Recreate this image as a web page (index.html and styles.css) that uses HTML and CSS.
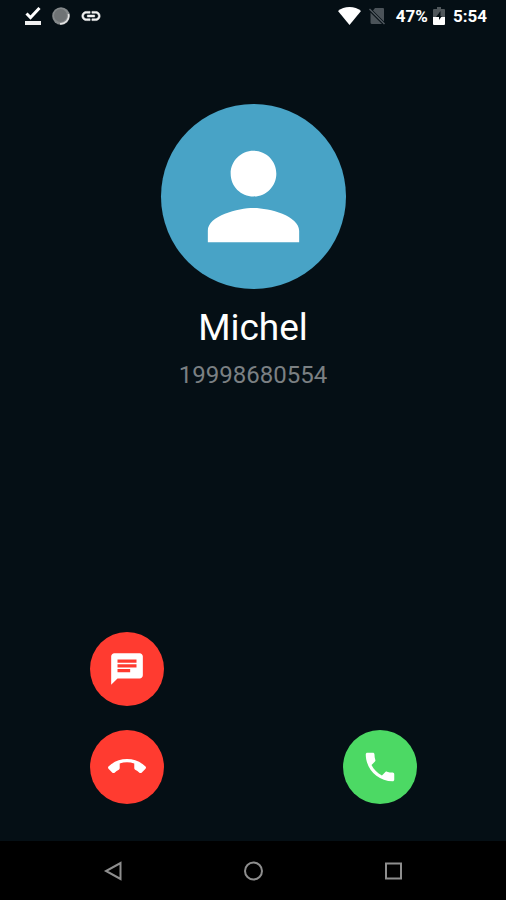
FILE: index.html
```html
<!DOCTYPE html>
<html lang="en">
<head>
<meta charset="utf-8">
<meta name="viewport" content="width=device-width, initial-scale=1">
<title>Incoming call</title>
<link rel="stylesheet" href="styles.css">
</head>
<body>
<header class="status">
  <div class="status-left">
    <svg width="18" height="18" viewBox="0 0 18 18" aria-hidden="true"><path d="M2.500 6.500 6.500 10.500 15.500 1" fill="none" stroke="#fff" stroke-width="3"/><path d="M1 14h16v4H1z" fill="#f0f0f0"/></svg>
    <svg width="18" height="18" viewBox="0 0 18 18" aria-hidden="true"><circle cx="9" cy="9" r="8.800" fill="#85898b"/><circle cx="8.500" cy="8.500" r="6.500" fill="#6f7375"/><path d="M16.500 7A8 8 0 0 1 8 16.800" fill="none" stroke="#e4e4e4" stroke-width="1.600"/></svg>
    <svg width="22" height="22" viewBox="0 0 24 24" aria-hidden="true"><path fill="#f2f2f2" stroke="#f2f2f2" stroke-width=".6" d="M3.900 12c0-1.710 1.390-3.100 3.100-3.100h4V7H7c-2.760 0-5 2.240-5 5s2.240 5 5 5h4v-1.900H7c-1.710 0-3.100-1.390-3.100-3.100zM8 13h8v-2H8v2zm9-6h-4v1.900h4c1.710 0 3.100 1.390 3.100 3.100s-1.390 3.100-3.100 3.100h-4V17h4c2.760 0 5-2.240 5-5s-2.240-5-5-5z"/></svg>
  </div>
  <div class="status-right">
    <svg width="23" height="18" viewBox="0 0 23 18" aria-hidden="true"><path fill="#fff" d="M11.500 18 0 4C3 1.500 7 0 11.500 0S20 1.500 23 4z"/></svg>
    <svg width="18" height="18" viewBox="0 0 18 18" aria-hidden="true"><path fill="#4b5359" d="M6 1h8a1 1 0 0 1 1 1v12.500L4 3.500zM1.500 5.500 13 17H3a1.500 1.500 0 0 1-1.500-1.500z"/><path d="M.5 2 15.500 17" stroke="#545c62" stroke-width="1.500"/></svg>
    <span class="percent">47%</span>
    <svg width="12" height="18" viewBox="0 0 12 18" aria-hidden="true"><path fill="#50575b" d="M4 0h4v2h3a1 1 0 0 1 1 1v7H0V3a1 1 0 0 1 1-1h3z"/><path fill="#fff" d="M0 10h12v7a1 1 0 0 1-1 1H1a1 1 0 0 1-1-1z"/><path fill="#071116" d="M7.500 4 3 10h3v3l3-4H7.500z"/><path fill="#fff" d="M3 10h3v3z"/></svg>
    <time class="clock">5:54</time>
  </div>
</header>
<main class="call">
  <section class="caller">
    <div class="avatar">
      <svg width="137" height="137" viewBox="0 0 24 24" aria-hidden="true"><path fill="#fff" d="M12 12c2.210 0 4-1.790 4-4s-1.790-4-4-4-4 1.790-4 4 1.790 4 4 4zm0 2c-2.670 0-8 1.340-8 4v2h16v-2c0-2.660-5.330-4-8-4z"/></svg>
    </div>
    <h1 class="name">Michel</h1>
    <p class="number">19998680554</p>
  </section>
  <section class="actions">
    <div class="column">
      <button class="round" type="button" aria-label="Reply with message"><svg width="38" height="38" viewBox="0 0 24 24" aria-hidden="true"><path fill="#fff" d="M20 2H4c-1.100 0-1.990.9-1.990 2L2 22l4-4h14c1.100 0 2-.9 2-2V4c0-1.100-.9-2-2-2zM6 9h12v2H6V9zm8 5H6v-2h8v2zm4-6H6V6h12v2z"/></svg></button>
      <button class="round" type="button" aria-label="Decline"><svg width="38" height="38" viewBox="0 0 24 24" aria-hidden="true"><path fill="#fff" d="M12 9c-1.600 0-3.150.25-4.600.72v3.100c0 .39-.23.740-.56.900-.98.490-1.870 1.120-2.660 1.850-.18.180-.43.280-.7.280-.28 0-.53-.11-.71-.29L.29 13.080c-.18-.17-.29-.42-.29-.70 0-.28.110-.53.290-.71C3.340 8.780 7.460 7 12 7s8.660 1.780 11.710 4.670c.18.180.29.430.29.710 0 .28-.11.530-.29.710l-2.480 2.480c-.18.180-.43.290-.71.290-.27 0-.52-.11-.70-.28-.79-.74-1.690-1.360-2.670-1.850-.33-.16-.56-.50-.56-.90v-3.100C15.150 9.250 13.600 9 12 9z"/></svg></button>
    </div>
    <div class="column">
      <button class="round answer" type="button" aria-label="Answer"><svg width="38" height="38" viewBox="0 0 24 24" aria-hidden="true"><path fill="#fff" d="M6.620 10.790c1.440 2.830 3.760 5.140 6.590 6.590l2.200-2.200c.27-.27.670-.36 1.020-.24 1.120.37 2.330.570 3.570.570.550 0 1 .45 1 1V20c0 .55-.45 1-1 1-9.390 0-17-7.610-17-17 0-.55.450-1 1-1h3.500c.55 0 1 .45 1 1 0 1.250.2 2.450.57 3.570.11.350.03.740-.25 1.020l-2.200 2.200z"/></svg></button>
    </div>
  </section>
</main>
<nav class="nav" aria-label="System">
  <button type="button" aria-label="Back"><svg width="20" height="20" viewBox="0 0 20 20"><path d="M17.500 2v16L3 10z"/></svg></button>
  <button type="button" aria-label="Home"><svg width="20" height="20" viewBox="0 0 20 20"><circle cx="10.500" cy="10" r="8.500"/></svg></button>
  <button type="button" aria-label="Recent apps"><svg width="20" height="20" viewBox="0 0 20 20"><rect x="3" y="2.500" width="15" height="15"/></svg></button>
</nav>
</body>
</html>
```
FILE: styles.css
```css
* {
  box-sizing: border-box;
}

body {
  margin: 0;
  min-height: 100vh;
  display: flex;
  flex-direction: column;
  background: #050f15;
  color: #fff;
  font-family: Roboto, "Liberation Sans", sans-serif;
}

svg {
  display: block;
  flex: none;
}

button {
  border: 0;
  padding: 0;
  background: none;
  display: flex;
  align-items: center;
  justify-content: center;
}

.status {
  display: flex;
  align-items: center;
  justify-content: space-between;
  height: 31px;
  padding: 0 19px 0 24px;
}

.status-left,
.status-right {
  display: flex;
  align-items: center;
}

.status-left {
  gap: 10px;
}

.status-right {
  gap: 8px;
  font-size: 17px;
  line-height: 20px;
  font-weight: 700;
}

.percent {
  margin: 0 -3px 0 1px;
}

.call {
  flex: 1;
  display: flex;
  flex-direction: column;
  justify-content: space-between;
  padding: 73px 0 37px;
}

.caller {
  display: flex;
  flex-direction: column;
  align-items: center;
}

.avatar {
  display: flex;
  align-items: center;
  justify-content: center;
  width: 185px;
  height: 185px;
  border-radius: 50%;
  background: #48a3c6;
}

.name {
  margin: 17px 0 11px;
  font-size: 37px;
  line-height: 44px;
  font-weight: 400;
}

.number {
  margin: 0;
  color: #7b8083;
  font-size: 24px;
  line-height: 28px;
}

.actions {
  display: grid;
  grid-template-columns: 1fr 1fr;
  align-items: end;
}

.column {
  display: flex;
  flex-direction: column;
  align-items: center;
  gap: 24px;
}

.round {
  width: 74px;
  height: 74px;
  border-radius: 50%;
  background: #ff3b30;
}

.answer {
  background: #4cd964;
}

.nav {
  display: grid;
  grid-template-columns: repeat(3, 1fr);
  height: 59px;
  padding: 0 43px;
  background: #000;
}

.nav svg {
  fill: none;
  stroke: #8e8e8e;
  stroke-width: 2;
}
```
